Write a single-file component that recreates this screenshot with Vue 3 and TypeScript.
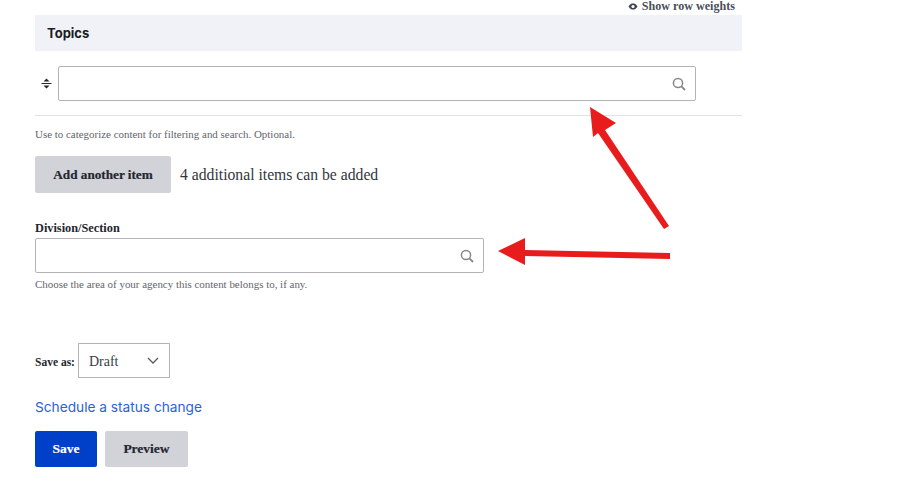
<script setup lang="ts">
const helpTopics = 'Use to categorize content for filtering and search. Optional.'
const helpDivision = 'Choose the area of your agency this content belongs to, if any.'
</script>

<template>
  <div class="page">
    <div class="weights">
      <svg class="eye" width="10" height="7" viewBox="0 0 10 7">
        <path d="M0.5 3.5C2 1 3.5 0.5 5 0.5S8 1 9.5 3.5C8 6 6.5 6.5 5 6.5S2 6 0.5 3.5Z" fill="#3f4450" />
        <circle cx="5" cy="3.5" r="1.6" fill="#fff" />
      </svg>
      <span>Show row weights</span>
    </div>

    <div class="table-head">Topics</div>
    <div class="table-row">
      <svg class="drag" width="11" height="11" viewBox="0 0 11 11">
        <path d="M5.5 0.5 8.5 3.5H2.5Z M5.5 10.5 2.5 7.5H8.5Z" fill="#23262f" />
        <rect x="0.5" y="5" width="10" height="1" fill="#23262f" />
      </svg>
      <div class="field wide">
        <svg class="search" width="14" height="14" viewBox="0 0 14 14">
          <circle cx="6" cy="6" r="4.6" fill="none" stroke="#85878c" stroke-width="1.5" />
          <path d="M9.4 9.4 13 13" stroke="#85878c" stroke-width="1.8" />
        </svg>
      </div>
    </div>
    <p class="help topics-help">{{ helpTopics }}</p>

    <div class="add-row">
      <button class="btn grey add">Add another item</button>
      <span class="remaining">4 additional items can be added</span>
    </div>

    <label class="label">Division/Section</label>
    <div class="field narrow">
      <svg class="search" width="14" height="14" viewBox="0 0 14 14">
        <circle cx="6" cy="6" r="4.6" fill="none" stroke="#85878c" stroke-width="1.5" />
        <path d="M9.4 9.4 13 13" stroke="#85878c" stroke-width="1.8" />
      </svg>
    </div>
    <p class="help division-help">{{ helpDivision }}</p>

    <div class="save-as">
      <span class="save-label">Save as:</span>
      <div class="select">
        <span class="select-value">Draft</span>
        <svg width="12" height="7" viewBox="0 0 12 7">
          <path d="M1 1 6 6 11 1" fill="none" stroke="#55585f" stroke-width="1.3" />
        </svg>
      </div>
    </div>

    <a class="schedule" href="#">Schedule a status change</a>

    <div class="actions">
      <button class="btn blue">Save</button>
      <button class="btn grey">Preview</button>
    </div>

    <svg class="arrows" width="915" height="498" viewBox="0 0 915 498">
      <path d="M590 107 616 123 605 130 669 226 664 229 598 133 593 137Z" fill="#e81c1c" />
      <path d="M498 251 525 238 525 250 670 253 670 259 525 256 525 265Z" fill="#e81c1c" />
    </svg>
  </div>
</template>

<style scoped>
.page {
  position: relative;
  width: 915px;
  height: 498px;
  box-sizing: border-box;
  padding-left: 35px;
  overflow: hidden;
  background: #fff;
  font-family: "Liberation Serif", serif;
  color: #23262f;
}

.weights {
  display: flex;
  align-items: center;
  justify-content: flex-end;
  gap: 4px;
  width: 700px;
  height: 15px;
  padding-bottom: 3px;
  box-sizing: border-box;
  font-size: 12.1px;
  font-weight: 700;
  color: #4a4f5c;
}

.table-head {
  width: 707px;
  height: 36px;
  box-sizing: border-box;
  padding-left: 12px;
  background: #f1f2f8;
  font-family: Inter, sans-serif;
  font-size: 13px;
  font-weight: 700;
  line-height: 36px;
  color: #1b1d24;
}

.table-row {
  display: flex;
  align-items: center;
  width: 707px;
  height: 65px;
  box-sizing: border-box;
  padding: 1px 0 0 6px;
  border-bottom: 1px solid #e2e2e4;
}

.drag {
  margin-right: 6px;
}

.field {
  display: flex;
  align-items: center;
  justify-content: flex-end;
  height: 35px;
  box-sizing: border-box;
  padding-right: 9px;
  background: #fff;
  border: 1px solid #b3b4b8;
  border-radius: 2px;
}

.wide {
  width: 638px;
}

.narrow {
  width: 449px;
}

.help {
  margin: 0;
  font-size: 10.95px;
  line-height: 14px;
  color: #63656d;
}

.topics-help {
  margin-top: 11px;
}

.add-row {
  display: flex;
  align-items: center;
  gap: 9px;
  margin-top: 15px;
}

.btn {
  height: 36px;
  border: 0;
  border-radius: 2px;
  font-family: "Liberation Serif", serif;
  font-size: 13.5px;
  font-weight: 700;
  -webkit-text-stroke: 0.2px currentColor;
}

.grey {
  background: #d2d3d8;
  color: #23262f;
}

.blue {
  width: 62px;
  background: #0040c9;
  color: #fff;
}

.add {
  width: 136px;
  height: 37px;
  font-size: 13.2px;
}

.remaining {
  font-size: 15.7px;
  color: #33363d;
}

.label {
  display: block;
  margin-top: 27px;
  padding-bottom: 1px;
  font-size: 12.3px;
  font-weight: 700;
  line-height: 17px;
  color: #23262f;
}

.division-help {
  margin-top: 4px;
}

.save-as {
  display: flex;
  align-items: center;
  gap: 3px;
  margin-top: 52px;
}

.save-label {
  padding-top: 2px;
  font-size: 11.5px;
  font-weight: 700;
}

.select {
  display: flex;
  align-items: center;
  justify-content: space-between;
  width: 92px;
  height: 35px;
  box-sizing: border-box;
  padding: 0 10px 0 10px;
  border: 1px solid #b3b4b8;
  font-size: 14px;
  color: #3a3d44;
}

.select-value {
  padding-top: 2px;
}

.schedule {
  display: block;
  margin-top: 20px;
  font-family: Inter, sans-serif;
  font-size: 13.7px;
  line-height: 18px;
  color: #2b62d9;
  text-decoration: none;
}

.actions {
  display: flex;
  gap: 8px;
  margin-top: 15px;
}

.actions .grey {
  width: 83px;
}

.arrows {
  position: absolute;
  top: 0;
  left: 0;
  pointer-events: none;
}
</style>
